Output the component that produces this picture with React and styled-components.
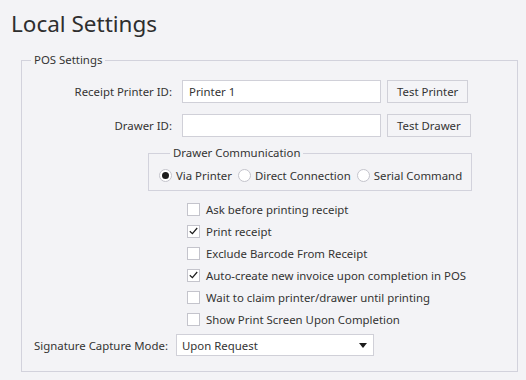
import React from "react";
import styled, { createGlobalStyle } from "styled-components";

const GlobalStyle = createGlobalStyle`
  html, body {
    margin: 0;
    background: #f3f3f6;
  }
  body {
    font-family: "Noto Sans", "Open Sans", sans-serif;
    font-size: 11.4px;
    color: #333;
  }
`;

const Page = styled.div`
  width: 526px;
  height: 380px;
  box-sizing: border-box;
  padding: 8px 8px 0 21px;
  overflow: hidden;
`;

const Title = styled.h1`
  margin: 0 0 12px -10px;
  font-size: 22.5px;
  font-weight: 400;
  line-height: 32px;
  color: #2e2e2e;
`;

const Group = styled.fieldset`
  margin: 0;
  padding: ${(p) => p.$pad || "0"};
  border: 1px solid #d2d2dc;
  min-width: 0;
  box-sizing: border-box;
  width: ${(p) => p.$width || "auto"};
`;

const Legend = styled.legend`
  margin-left: ${(p) => p.$indent || "9px"};
  padding: 0 3px;
  line-height: 16px;
  color: #333;
`;

const FieldGrid = styled.div`
  display: grid;
  grid-template-columns: 154px 199px auto;
  column-gap: 6px;
  row-gap: 11px;
  align-items: center;
  justify-items: start;
`;

const Label = styled.label`
  justify-self: end;
  margin-right: 4px;
  white-space: nowrap;
`;

const TextBox = styled.div`
  width: 199px;
  height: 23px;
  box-sizing: border-box;
  border: 1px solid #d0d0d8;
  background: #fff;
  padding: 0 6px;
  line-height: 21px;
`;

const Button = styled.button`
  height: 23px;
  box-sizing: border-box;
  border: 1px solid #d0d0d8;
  background: #f4f4f7;
  padding: 0 9px;
  font: inherit;
  color: #333;
`;

const CommWrap = styled.div`
  margin: 8px 0 0 126px;
`;

const RadioRow = styled.div`
  display: flex;
  align-items: center;
  gap: 6px;
  height: 16px;
`;

const RadioItem = styled.label`
  display: flex;
  align-items: center;
  gap: 4px;
  white-space: nowrap;
`;

const RadioDot = styled.span`
  width: 13px;
  height: 13px;
  box-sizing: border-box;
  border-radius: 50%;
  border: 1px solid #c4c4cc;
  background: #fff;
  display: flex;
  align-items: center;
  justify-content: center;
  &::after {
    content: "";
    width: 7px;
    height: 7px;
    border-radius: 50%;
    background: ${(p) => (p.$on ? "#1b1b1b" : "transparent")};
  }
`;

const CheckList = styled.div`
  margin: 7px 0 0 165px;
  display: flex;
  flex-direction: column;
`;

const CheckRow = styled.label`
  display: flex;
  align-items: center;
  gap: 6px;
  height: 22px;
  white-space: nowrap;
`;

const Box = styled.span`
  width: 13px;
  height: 13px;
  box-sizing: border-box;
  border: 1px solid #c4c4cc;
  background: #fff;
  display: flex;
  align-items: center;
  justify-content: center;
`;

const SignatureRow = styled.div`
  display: flex;
  align-items: center;
  margin: 4px 0 0 12px;
`;

const SignatureLabel = styled.label`
  width: 142px;
  white-space: nowrap;
`;

const Combo = styled.div`
  width: 198px;
  height: 22px;
  box-sizing: border-box;
  border: 1px solid #d0d0d8;
  background: #fff;
  display: flex;
  align-items: center;
  justify-content: space-between;
  padding: 0 6px 0 5px;
`;

const Check = ({ on, children }) => (
  <CheckRow>
    <Box>
      {on && (
        <svg width="9" height="8" viewBox="0 0 9 8">
          <path d="M0.8 4.2 L3.4 6.6 L8.2 1" fill="none" stroke="#1b1b1b" strokeWidth="1.2" />
        </svg>
      )}
    </Box>
    {children}
  </CheckRow>
);

const Radio = ({ on, children }) => (
  <RadioItem>
    <RadioDot $on={on} />
    {children}
  </RadioItem>
);

export default function App() {
  return (
    <Page>
      <GlobalStyle />
      <Title>Local Settings</Title>
      <Group $pad="12px 0 15px 0">
        <Legend>POS Settings</Legend>
        <FieldGrid>
          <Label>Receipt Printer ID:</Label>
          <TextBox>Printer 1</TextBox>
          <Button>Test Printer</Button>
          <Label>Drawer ID:</Label>
          <TextBox />
          <Button>Test Drawer</Button>
        </FieldGrid>
        <CommWrap>
          <Group $width="324px" $pad="6px 0 7px 10px">
            <Legend $indent="11px">Drawer Communication</Legend>
            <RadioRow>
              <Radio on>Via Printer</Radio>
              <Radio>Direct Connection</Radio>
              <Radio>Serial Command</Radio>
            </RadioRow>
          </Group>
        </CommWrap>
        <CheckList>
          <Check>Ask before printing receipt</Check>
          <Check on>Print receipt</Check>
          <Check>Exclude Barcode From Receipt</Check>
          <Check on>Auto-create new invoice upon completion in POS</Check>
          <Check>Wait to claim printer/drawer until printing</Check>
          <Check>Show Print Screen Upon Completion</Check>
        </CheckList>
        <SignatureRow>
          <SignatureLabel>Signature Capture Mode:</SignatureLabel>
          <Combo>
            Upon Request
            <svg width="8" height="5" viewBox="0 0 8 5">
              <path d="M0 0 H8 L4 5 Z" fill="#1b1b1b" />
            </svg>
          </Combo>
        </SignatureRow>
      </Group>
    </Page>
  );
}
